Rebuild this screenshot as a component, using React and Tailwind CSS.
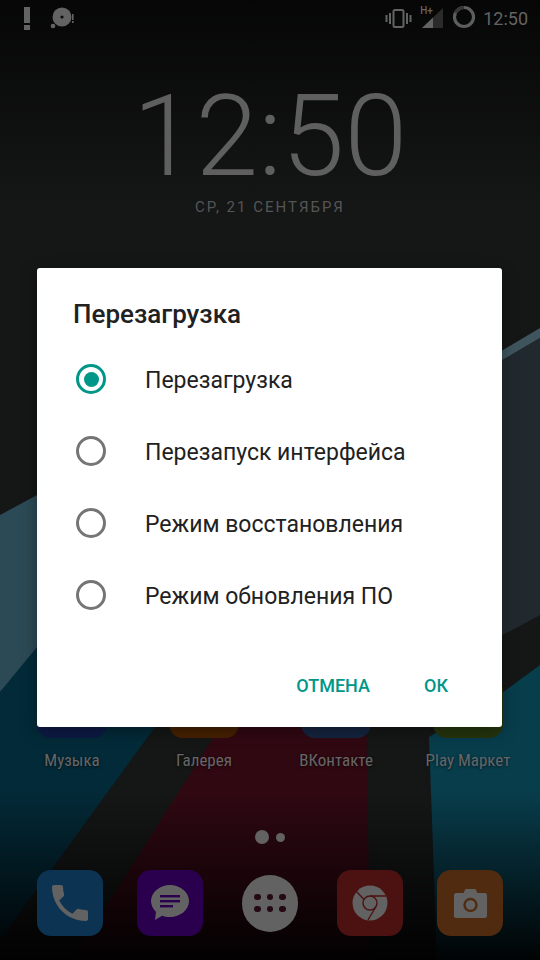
import React from "react";

const options = [
  "Перезагрузка",
  "Перезапуск интерфейса",
  "Режим восстановления",
  "Режим обновления ПО",
];

const apps = [
  { name: "Музыка", color: "bg-[#0e1a46]" },
  { name: "Галерея", color: "bg-[#472100]" },
  { name: "ВКонтакте", color: "bg-[#152540]" },
  { name: "Play Маркет", color: "bg-[#26350e]" },
];

function Wallpaper() {
  return (
    <svg className="absolute inset-0" width="540" height="960" viewBox="0 0 540 960">
      <defs>
        <linearGradient id="topFade" x1="0" y1="0" x2="0" y2="1">
          <stop offset="0" stopColor="#000" stopOpacity="0.72" />
          <stop offset="1" stopColor="#000" stopOpacity="0" />
        </linearGradient>
        <linearGradient id="bottomFade" x1="0" y1="0" x2="0" y2="1">
          <stop offset="0" stopColor="#000" stopOpacity="0" />
          <stop offset="1" stopColor="#000" stopOpacity="0.95" />
        </linearGradient>
      </defs>
      <rect width="540" height="960" fill="#151616" />
      {/* left side */}
      <polygon points="0,515 300,353 300,400 0,692" fill="#2c4a55" />
      <polygon points="0,692 37,647 200,660 155,727 0,940" fill="#032a38" />
      {/* middle */}
      <polygon points="220,727 366,700 370,960 72,960" fill="#300812" />
      {/* right side */}
      <polygon points="300,470 540,328 540,338 300,480" fill="#3f555e" />
      <polygon points="400,420 540,338 540,615 400,690" fill="#22292e" />
      <polygon points="429,737 502,693 540,665 540,960 437,960" fill="#083d4c" />
      <rect width="540" height="210" fill="url(#topFade)" />
      <rect y="790" width="540" height="170" fill="url(#bottomFade)" />
    </svg>
  );
}

function StatusBar() {
  return (
    <div className="flex h-[34px] items-center pl-[24px] pr-[12px] text-[#636363]">
      <svg width="50" height="30" viewBox="0 0 50 30">
        <rect x="0" y="5" width="6" height="16" fill="#636363" />
        <rect x="0" y="23" width="6" height="5" fill="#636363" />
        <circle cx="38" cy="15" r="9.5" fill="#636363" />
        <circle cx="38" cy="15" r="1.6" fill="#0a0a0a" />
        <circle cx="29" cy="24" r="2.3" fill="#636363" />
        <rect x="48" y="12" width="1.6" height="6" fill="#636363" />
        <rect x="48" y="19" width="1.6" height="2" fill="#636363" />
      </svg>
      <div className="ml-auto flex items-center">
        <svg width="27" height="22" viewBox="0 0 27 22">
          <rect x="8.5" y="4" width="10" height="17" rx="1.5" fill="none" stroke="#636363" strokeWidth="2" />
          <rect x="4" y="7" width="2" height="11" fill="#636363" />
          <rect x="0.5" y="9" width="2" height="7" fill="#636363" />
          <rect x="21" y="7" width="2" height="11" fill="#636363" />
          <rect x="24.5" y="9" width="2" height="7" fill="#636363" />
        </svg>
        <div className="relative ml-[8px] h-[22px] w-[23px]">
          <svg className="absolute inset-0" width="23" height="22" viewBox="0 0 23 22">
            <polygon points="2,22 23,2 23,22" fill="#2b2b2b" />
            <polygon points="2,22 13,11.5 13,22" fill="#636363" />
          </svg>
          <span className="absolute left-0 top-[-2px] font-['Roboto'] text-[10px] font-medium leading-[14px]">H+</span>
        </div>
        <svg className="ml-[8.5px]" width="24" height="24" viewBox="0 0 24 24">
          <circle cx="12" cy="12" r="9.5" fill="none" stroke="#5e5e5e" strokeWidth="3.2" />
          <path d="M12 2.5A9.5 9.5 0 0 0 3.5 8" fill="none" stroke="#363636" strokeWidth="3.2" />
        </svg>
        <span className="ml-[7.5px] pt-[3px] font-['Roboto'] text-[18px] leading-[24px]">12:50</span>
      </div>
    </div>
  );
}

function Dock() {
  return (
    <div className="mt-[26px] flex items-center gap-[34px] pl-[37px]">
      <div className="flex h-[66px] w-[66px] items-center justify-center rounded-[14px] bg-[#0c3352]">
        <svg width="48" height="48" viewBox="0 0 24 24" fill="#626262">
          <path d="M6.62 10.79c1.44 2.83 3.76 5.14 6.59 6.59l2.2-2.2c.27-.27.67-.36 1.02-.24 1.12.37 2.33.57 3.57.57.55 0 1 .45 1 1V20c0 .55-.45 1-1 1-9.39 0-17-7.61-17-17 0-.55.45-1 1-1h3.5c.55 0 1 .45 1 1 0 1.25.2 2.45.57 3.57.11.35.03.74-.25 1.02l-2.2 2.2z" />
        </svg>
      </div>
      <div className="flex h-[66px] w-[66px] items-center justify-center rounded-[14px] bg-[#2a004e]">
        <svg width="40" height="38" viewBox="0 0 40 38">
          <path d="M20 1C30 1 39 8 39 17C39 26 30 33 20 33C17 33 14 32.6 12 31.7L5 36L6 28C3 25 1 21 1 17C1 8 10 1 20 1Z" fill="#626262" />
          <rect x="10" y="11" width="20" height="2.4" fill="#2a004e" />
          <rect x="10" y="16" width="20" height="2.4" fill="#2a004e" />
          <rect x="10" y="21" width="13" height="2.4" fill="#2a004e" />
        </svg>
      </div>
      <div className="mx-[5px] flex h-[57px] w-[56px] items-center justify-center rounded-full bg-[#626262]">
        <div className="grid grid-cols-3 gap-x-[6px] gap-y-[5.5px]">
          {[0, 1, 2, 3, 4, 5].map((i) => (
            <div key={i} className="h-[6.5px] w-[6.5px] rounded-full bg-[#240814]" />
          ))}
        </div>
      </div>
      <div className="flex h-[66px] w-[66px] items-center justify-center rounded-[14px] bg-[#4c1212]">
        <svg width="36" height="36" viewBox="0 0 36 36">
          <circle cx="18" cy="18" r="17.5" fill="#626262" />
          <circle cx="18" cy="18" r="7" fill="none" stroke="#4c1212" strokeWidth="1.4" />
          <path d="M18 11H34M12 14.5L4 6M24 21.5L16 35" fill="none" stroke="#4c1212" strokeWidth="1.4" />
        </svg>
      </div>
      <div className="flex h-[66px] w-[66px] items-center justify-center rounded-[14px] bg-[#502b10]">
        <svg width="33" height="30" viewBox="0 0 33 30">
          <path d="M2 5H9.5L11.5 1H21.5L23.5 5H31C32 5 33 6 33 7V28C33 29 32 30 31 30H2C1 30 0 29 0 28V7C0 6 1 5 2 5Z" fill="#626262" />
          <circle cx="16.5" cy="17" r="6" fill="none" stroke="#502b10" strokeWidth="2.4" />
        </svg>
      </div>
    </div>
  );
}

function Dialog() {
  return (
    <div className="absolute left-[37px] top-[268px] flex h-[459px] w-[465px] flex-col rounded-[3px] bg-white shadow-[0_4px_16px_rgba(0,0,0,0.35)] font-['Roboto']">
      <h2 className="pl-[36px] pt-[31px] text-[26px] font-medium leading-[30px] text-[#212121]">Перезагрузка</h2>
      <div className="mt-[16px] flex flex-col">
        {options.map((label, i) => (
          <div key={label} className="flex h-[72px] items-center pl-[39px]">
            {i === 0 ? (
              <div className="-mt-[4px] flex h-[30px] w-[30px] items-center justify-center rounded-full border-[3px] border-[#009688]">
                <div className="h-[15px] w-[15px] rounded-full bg-[#009688]" />
              </div>
            ) : (
              <div className="-mt-[4px] h-[30px] w-[30px] rounded-full border-[3px] border-[#757575]" />
            )}
            <span className="ml-[39px] text-[23px] leading-[28px] text-[#212121]">{label}</span>
          </div>
        ))}
      </div>
      <div className="mt-[41px] flex items-center justify-end pr-[54px] text-[18px] font-medium leading-[24px] text-[#009688]">
        <span>ОТМЕНА</span>
        <span className="ml-[54px]">ОК</span>
      </div>
    </div>
  );
}

export default function App() {
  return (
    <div className="relative h-[960px] w-[540px] overflow-hidden bg-[#151616]">
      <Wallpaper />
      <div className="relative flex h-full flex-col">
        <StatusBar />
        <div className="mt-[48px] text-center font-['Roboto'] text-[113px] font-light leading-[110px] text-[#5f5f5f]">12:50</div>
        <div className="mt-[6px] text-center font-['Roboto'] text-[15px] leading-[18px] tracking-[2px] text-[#555]">СР, 21 СЕНТЯБРЯ</div>

        <div className="mt-auto flex gap-[62px] pl-[37px]">
          {apps.map((app) => (
            <div key={app.name} className="flex w-[70px] flex-col items-center">
              <div className={`h-[60px] w-[70px] rounded-[14px] ${app.color}`} />
              <span className="mt-[11px] whitespace-nowrap font-['Roboto'] text-[17px] leading-[22px] text-[#666] [font-stretch:75%] [text-shadow:0_1px_3px_rgba(0,0,0,0.6)]">
                {app.name}
              </span>
            </div>
          ))}
        </div>

        <div className="mt-[59px] flex items-center justify-center gap-[7px]">
          <div className="h-[14px] w-[14px] rounded-full bg-[#626262]" />
          <div className="h-[9px] w-[9px] rounded-full bg-[#626262]" />
        </div>

        <div className="mb-[24px]">
          <Dock />
        </div>
      </div>
      <Dialog />
    </div>
  );
}
